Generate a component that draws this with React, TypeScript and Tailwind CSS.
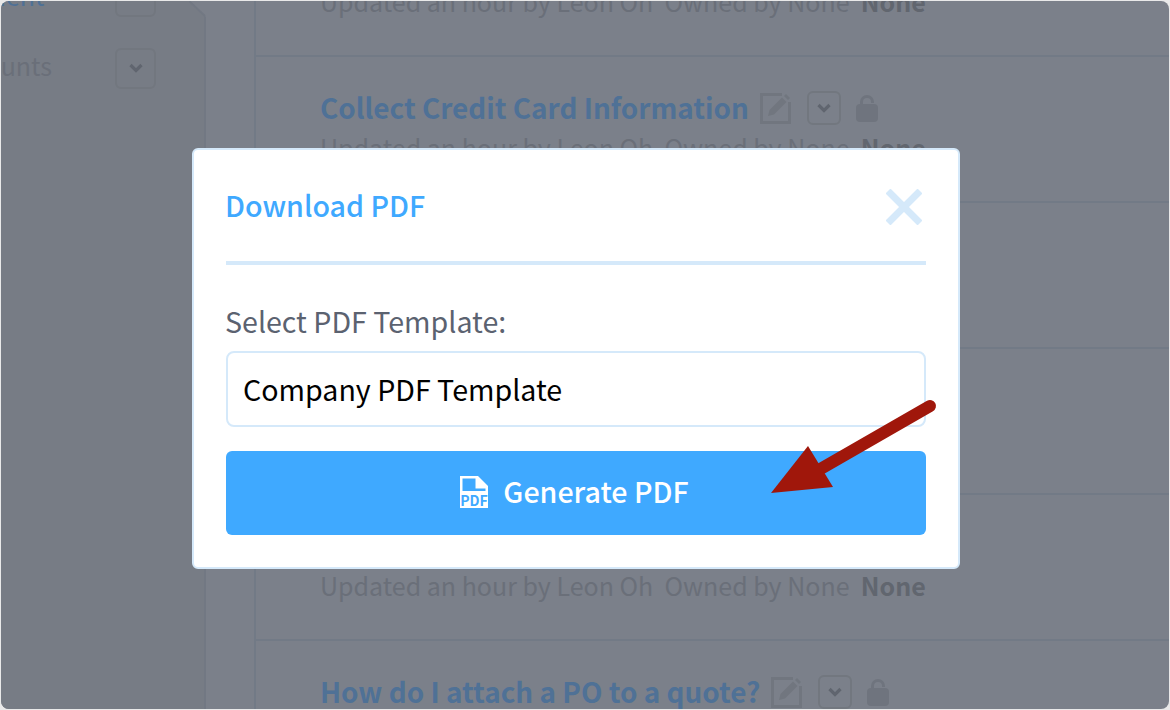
import React from 'react';

const font = { fontFamily: '"Noto Sans CJK SC", "Noto Sans", sans-serif' };

function EditIcon({ className }: { className?: string }) {
  return (
    <svg viewBox="0 0 31 31" className={className} fill="none">
      <path d="M22 1.500H1.500v28h28V9" stroke="#71767f" strokeWidth="3" />
      <path d="M8 23l1.500-6L22 4.500 26.500 9 14 21.500z" fill="#71767f" />
      <path d="M24 3l2-2 4 4-2 2z" fill="#71767f" />
    </svg>
  );
}

function Chevron() {
  return (
    <svg viewBox="0 0 16 16" className="w-[16px] h-[16px]" fill="none">
      <path d="M2.500 5l5.500 5.500L13.500 5" stroke="#60656f" strokeWidth="3.200" />
    </svg>
  );
}

function ChevronBox({ className }: { className: string }) {
  return (
    <span className={`flex shrink-0 items-center justify-center rounded-md border-2 border-[#72777f] ${className}`}>
      <Chevron />
    </span>
  );
}

function LockIcon() {
  return (
    <svg viewBox="0 0 22 27" className="w-[22px] h-[27px]">
      <path d="M5.500 11V7a5.500 5.500 0 0 1 11 0v1" stroke="#6f747e" strokeWidth="3" fill="none" />
      <rect x="0" y="9" width="22" height="18" rx="4" fill="#6f747e" />
    </svg>
  );
}

function PdfIcon() {
  return (
    <svg viewBox="0 0 28 32" className="w-[28px] h-[32px]">
      <path d="M0 0h18l10 10v22H0z" fill="#fff" />
      <path d="M2.500 2.500h13v10h10v2.500h-23z" fill="#3fa9ff" />
      <text x="14" y="30" textAnchor="middle" fontSize="14" fontWeight="700" fill="#3fa9ff" style={font}>PDF</text>
    </svg>
  );
}

function RowMeta() {
  return (
    <p className="mt-[1px] text-[25px] leading-[34px] text-[#6a6f79] whitespace-nowrap">
      Updated an hour by Leon Oh&nbsp; Owned by None&nbsp; <b className="font-bold text-[#61666f]">None</b>
    </p>
  );
}

function Row({ title, meta = true }: { title: string; meta?: boolean }) {
  return (
    <div className="h-[146px] pl-[64px] pt-[30px] border-b-2 border-[#727a86] box-border">
      <div className="flex items-center h-[42px]">
        <span className="text-[27.9px] font-semibold text-[#4f7196] whitespace-nowrap">{title}</span>
        <EditIcon className="ml-[11px] w-[31px] h-[31px]" />
        <ChevronBox className="ml-[16px] w-[34px] h-[34px]" />
        <span className="ml-[15px] flex"><LockIcon /></span>
      </div>
      {meta && <RowMeta />}
    </div>
  );
}

export default function App() {
  return (
    <div className="relative w-[1170px] h-[710px] bg-[#e9e9e9] p-[1px] overflow-hidden" style={font}>
      <div className="flex h-[708px] overflow-hidden rounded-[8px] bg-[#7b808a]">
        {/* sidebar */}
        <aside className="relative w-[205px] shrink-0 bg-[#777c85] border-r-2 border-[#727883] pr-[48px]">
          <div className="-mt-[25px] flex flex-col gap-[32px]">
            <div className="flex items-center justify-between h-[40px]">
              <span className="text-[25px] text-[#4f7196] -ml-[60px]">Payment</span>
              <ChevronBox className="w-[41px] h-[41px]" />
            </div>
            <div className="flex items-center justify-between h-[40px]">
              <span className="text-[25px] text-[#6a6f79] -ml-[55px] -mt-[5px]">Accounts</span>
              <ChevronBox className="w-[41px] h-[41px]" />
            </div>
          </div>
          {/* folded corner */}
          <svg viewBox="0 0 17 16" className="absolute -right-[2px] top-0 w-[17px] h-[16px]">
            <path d="M0 0H17V16z" fill="#7b808a" />
            <path d="M0 0L16 15" stroke="#727883" strokeWidth="2" fill="none" />
          </svg>
        </aside>
        <div className="w-[48px] shrink-0" />
        {/* list */}
        <main className="flex-1 min-w-0 border-l-2 border-[#727a86] -mt-[90px]">
          <Row title="Collect Payment" />
          <Row title="Collect Credit Card Information" />
          <Row title="Collect Shipping Address" />
          <Row title="Collect Billing Address" />
          <Row title="Collect Purchase Order" />
          <Row title="How do I attach a PO to a quote?" meta={false} />
        </main>
      </div>

      {/* modal */}
      <div className="absolute left-[192px] top-[148px] w-[768px] h-[421px] bg-white rounded-[6px] border-2 border-[#d5e9fa] px-[32px] box-border">
        <div className="flex items-center justify-between h-[111px] border-b-4 border-[#d5e9fa] box-content">
          <h2 className="-ml-[1px] text-[28.6px] font-medium text-[#3fa9ff]">Download PDF</h2>
          <svg viewBox="0 0 36 36" className="w-[36px] h-[36px] mr-[4px] mt-[3px]">
            <path d="M2 2l32 32M34 2L2 34" stroke="#d5e9fa" strokeWidth="7" />
          </svg>
        </div>
        <label className="block -ml-[1px] mt-[36px] text-[28.6px] leading-[40px] text-[#5b6270]">Select PDF Template:</label>
        <div className="mt-[10px] h-[76px] rounded-[8px] border-2 border-[#d5e9fa] flex items-center pl-[15px] text-[28.6px] text-black">
          Company PDF Template
        </div>
        <button className="mt-[24px] w-full h-[84px] rounded-[6px] bg-[#3fa9ff] flex items-center justify-center gap-[15px] pr-[3px] pb-[3px] text-white text-[28.6px] font-medium">
          <PdfIcon />
          Generate PDF
        </button>
      </div>

      {/* annotation arrow */}
      <svg className="absolute left-[760px] top-[395px] w-[185px] h-[105px]" viewBox="0 0 185 105">
        <path d="M170 11L50 80" stroke="#a0170b" strokeWidth="12" strokeLinecap="round" />
        <path d="M11 98L48 51 73 92z" fill="#a0170b" />
      </svg>
    </div>
  );
}
